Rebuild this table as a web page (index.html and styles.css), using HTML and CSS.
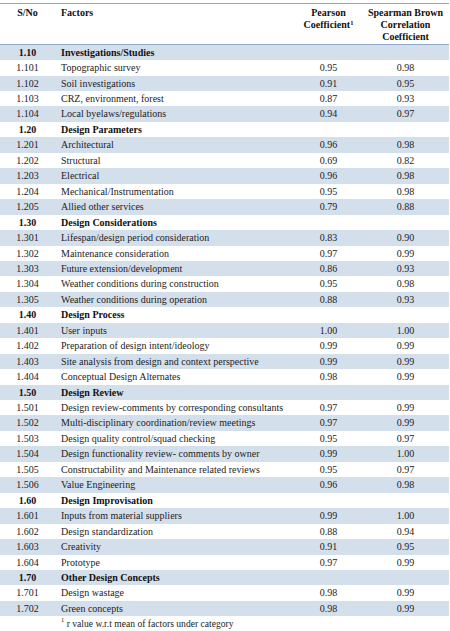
FILE: index.html
```html
<!DOCTYPE html>
<html lang="en">
<head>
    <meta charset="UTF-8">
    <meta name="viewport" content="width=device-width, initial-scale=1.0">
    <title>Design Factors - Reliability</title>
    <link rel="stylesheet" href="styles.css">
</head>
<body>
    <table class="factor-table">
        <colgroup>
            <col class="col-no">
            <col class="col-factor">
            <col class="col-pearson">
            <col class="col-spearman">
        </colgroup>
        <thead>
            <tr>
                <th>S/No</th>
                <th class="left">Factors</th>
                <th>Pearson Coefficient<sup>1</sup></th>
                <th>Spearman Brown Correlation Coefficient</th>
            </tr>
        </thead>
        <tbody>
            <tr class="cat"><td>1.10</td><td class="left">Investigations/Studies</td><td></td><td></td></tr>
            <tr><td>1.101</td><td class="left">Topographic survey</td><td>0.95</td><td>0.98</td></tr>
            <tr><td>1.102</td><td class="left">Soil investigations</td><td>0.91</td><td>0.95</td></tr>
            <tr><td>1.103</td><td class="left">CRZ, environment, forest</td><td>0.87</td><td>0.93</td></tr>
            <tr><td>1.104</td><td class="left">Local byelaws/regulations</td><td>0.94</td><td>0.97</td></tr>

            <tr class="cat"><td>1.20</td><td class="left">Design Parameters</td><td></td><td></td></tr>
            <tr><td>1.201</td><td class="left">Architectural</td><td>0.96</td><td>0.98</td></tr>
            <tr><td>1.202</td><td class="left">Structural</td><td>0.69</td><td>0.82</td></tr>
            <tr><td>1.203</td><td class="left">Electrical</td><td>0.96</td><td>0.98</td></tr>
            <tr><td>1.204</td><td class="left">Mechanical/Instrumentation</td><td>0.95</td><td>0.98</td></tr>
            <tr><td>1.205</td><td class="left">Allied other services</td><td>0.79</td><td>0.88</td></tr>

            <tr class="cat"><td>1.30</td><td class="left">Design Considerations</td><td></td><td></td></tr>
            <tr><td>1.301</td><td class="left">Lifespan/design period consideration</td><td>0.83</td><td>0.90</td></tr>
            <tr><td>1.302</td><td class="left">Maintenance consideration</td><td>0.97</td><td>0.99</td></tr>
            <tr><td>1.303</td><td class="left">Future extension/development</td><td>0.86</td><td>0.93</td></tr>
            <tr><td>1.304</td><td class="left">Weather conditions during construction</td><td>0.95</td><td>0.98</td></tr>
            <tr><td>1.305</td><td class="left">Weather conditions during operation</td><td>0.88</td><td>0.93</td></tr>

            <tr class="cat"><td>1.40</td><td class="left">Design Process</td><td></td><td></td></tr>
            <tr><td>1.401</td><td class="left">User inputs</td><td>1.00</td><td>1.00</td></tr>
            <tr><td>1.402</td><td class="left">Preparation of design intent/ideology</td><td>0.99</td><td>0.99</td></tr>
            <tr><td>1.403</td><td class="left">Site analysis from design and context perspective</td><td>0.99</td><td>0.99</td></tr>
            <tr><td>1.404</td><td class="left">Conceptual Design Alternates</td><td>0.98</td><td>0.99</td></tr>

            <tr class="cat"><td>1.50</td><td class="left">Design Review</td><td></td><td></td></tr>
            <tr><td>1.501</td><td class="left">Design review-comments by corresponding consultants</td><td>0.97</td><td>0.99</td></tr>
            <tr><td>1.502</td><td class="left">Multi-disciplinary coordination/review meetings</td><td>0.97</td><td>0.99</td></tr>
            <tr><td>1.503</td><td class="left">Design quality control/squad checking</td><td>0.95</td><td>0.97</td></tr>
            <tr><td>1.504</td><td class="left">Design functionality review- comments by owner</td><td>0.99</td><td>1.00</td></tr>
            <tr><td>1.505</td><td class="left">Constructability and Maintenance related reviews</td><td>0.95</td><td>0.97</td></tr>
            <tr><td>1.506</td><td class="left">Value Engineering</td><td>0.96</td><td>0.98</td></tr>

            <tr class="cat"><td>1.60</td><td class="left">Design Improvisation</td><td></td><td></td></tr>
            <tr><td>1.601</td><td class="left">Inputs from material suppliers</td><td>0.99</td><td>1.00</td></tr>
            <tr><td>1.602</td><td class="left">Design standardization</td><td>0.88</td><td>0.94</td></tr>
            <tr><td>1.603</td><td class="left">Creativity</td><td>0.91</td><td>0.95</td></tr>
            <tr><td>1.604</td><td class="left">Prototype</td><td>0.97</td><td>0.99</td></tr>

            <tr class="cat"><td>1.70</td><td class="left">Other Design Concepts</td><td></td><td></td></tr>
            <tr><td>1.701</td><td class="left">Design wastage</td><td>0.98</td><td>0.99</td></tr>
            <tr><td>1.702</td><td class="left">Green concepts</td><td>0.98</td><td>0.99</td></tr>
        </tbody>
    </table>
    <p class="footnote"><sup>1</sup> r value w.r.t mean of factors under category</p>
</body>
</html>
```

FILE: styles.css
```css
body {
    font-family: "Liberation Serif", "Times New Roman", serif;
    font-size: 10px;
    color: #1c1c1c;
    background: #fff;
    margin: 0;
    padding-top: 2.5px;
}

.factor-table {
    width: 449px;
    border-collapse: collapse;
    table-layout: fixed;
    border-top: 1.5px solid #8fa9cb;
}

.col-no { width: 55px; }
.col-factor { width: 240px; }
.col-pearson { width: 67px; }
.col-spearman { width: 87px; }

.factor-table th {
    font-weight: bold;
    color: #111;
    vertical-align: top;
    text-align: center;
    line-height: 12.2px;
    padding: 3.5px 0 0;
    height: 35px;
    border-bottom: 1px solid #8fa9cb;
}

.factor-table th sup {
    font-size: 6.5px;
    vertical-align: top;
    line-height: 1;
    position: relative;
    top: 1px;
}

.factor-table td {
    text-align: center;
    height: 15.45px;
    padding: 0;
    line-height: 15.45px;
    white-space: nowrap;
}

.factor-table .left {
    text-align: left;
    padding-left: 6px;
}

.factor-table tbody tr:nth-child(odd) {
    background: #d4dfec;
}

.factor-table tr.cat td {
    font-weight: bold;
    color: #111;
}

.footnote {
    margin: 0;
    padding-left: 61px;
    font-size: 9.6px;
    line-height: 13px;
    padding-top: 1px;
}

.footnote sup {
    font-size: 6.5px;
    vertical-align: top;
    line-height: 1;
    position: relative;
    top: 0;
}
```
